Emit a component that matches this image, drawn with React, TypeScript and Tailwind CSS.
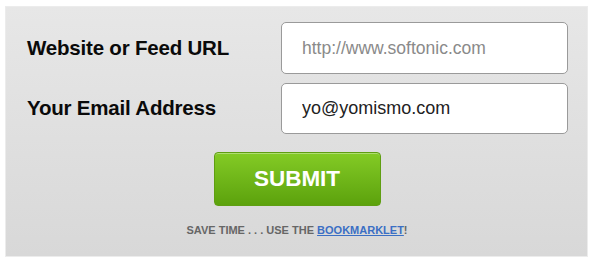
export default function App(): JSX.Element {
  return (
    <div className="w-[596px] h-[263px] bg-white pt-[6px] pl-[5px] font-['Liberation_Sans',Arial,sans-serif]">
      <div className="w-[583px] h-[251px] border border-[#ececec] bg-gradient-to-b from-[#e7e7e7] to-[#d8d8d8] flex flex-col">
        <div className="flex items-center h-[52px] mt-[15px]">
          <label className="w-[275px] pl-[21px] text-[20.5px] font-bold text-[#0a0a0a] tracking-[-0.2px]">
            Website or Feed URL
          </label>
          <input
            className="w-[287px] h-[52px] rounded-[5px] border border-[#9a9a9a] bg-white px-[20px] text-[17.5px] text-[#333] placeholder:text-[#8a8a8a] outline-none"
            placeholder="http://www.softonic.com"
          />
        </div>
        <div className="flex items-center h-[51px] mt-[9px]">
          <label className="w-[275px] pl-[21px] text-[20.5px] font-bold text-[#0a0a0a] tracking-[-0.2px]">
            Your Email Address
          </label>
          <input
            className="w-[287px] h-[51px] rounded-[5px] border border-[#9a9a9a] bg-white px-[20px] text-[18px] text-[#222] outline-none"
            defaultValue="yo@yomismo.com"
          />
        </div>
        <div className="flex justify-center mt-[18px] pl-[1px]">
          <button
            type="button"
            className="w-[167px] h-[54px] rounded-[4px] border border-[#5f9e12] bg-gradient-to-b from-[#84cb25] to-[#5ca20c] text-white text-[22.5px] font-bold shadow-[inset_0_1px_0_rgba(255,255,255,0.35)]"
          >
            SUBMIT
          </button>
        </div>
        <p className="mt-[16px] text-center pl-[1px] text-[11px] font-bold text-[#666] font-['Liberation_Sans_Narrow','Liberation_Sans',Arial,sans-serif]">
          SAVE TIME . . . USE THE{" "}
          <a href="#" className="text-[#3b6fc4] underline">
            BOOKMARKLET
          </a>
          !
        </p>
      </div>
    </div>
  );
}
